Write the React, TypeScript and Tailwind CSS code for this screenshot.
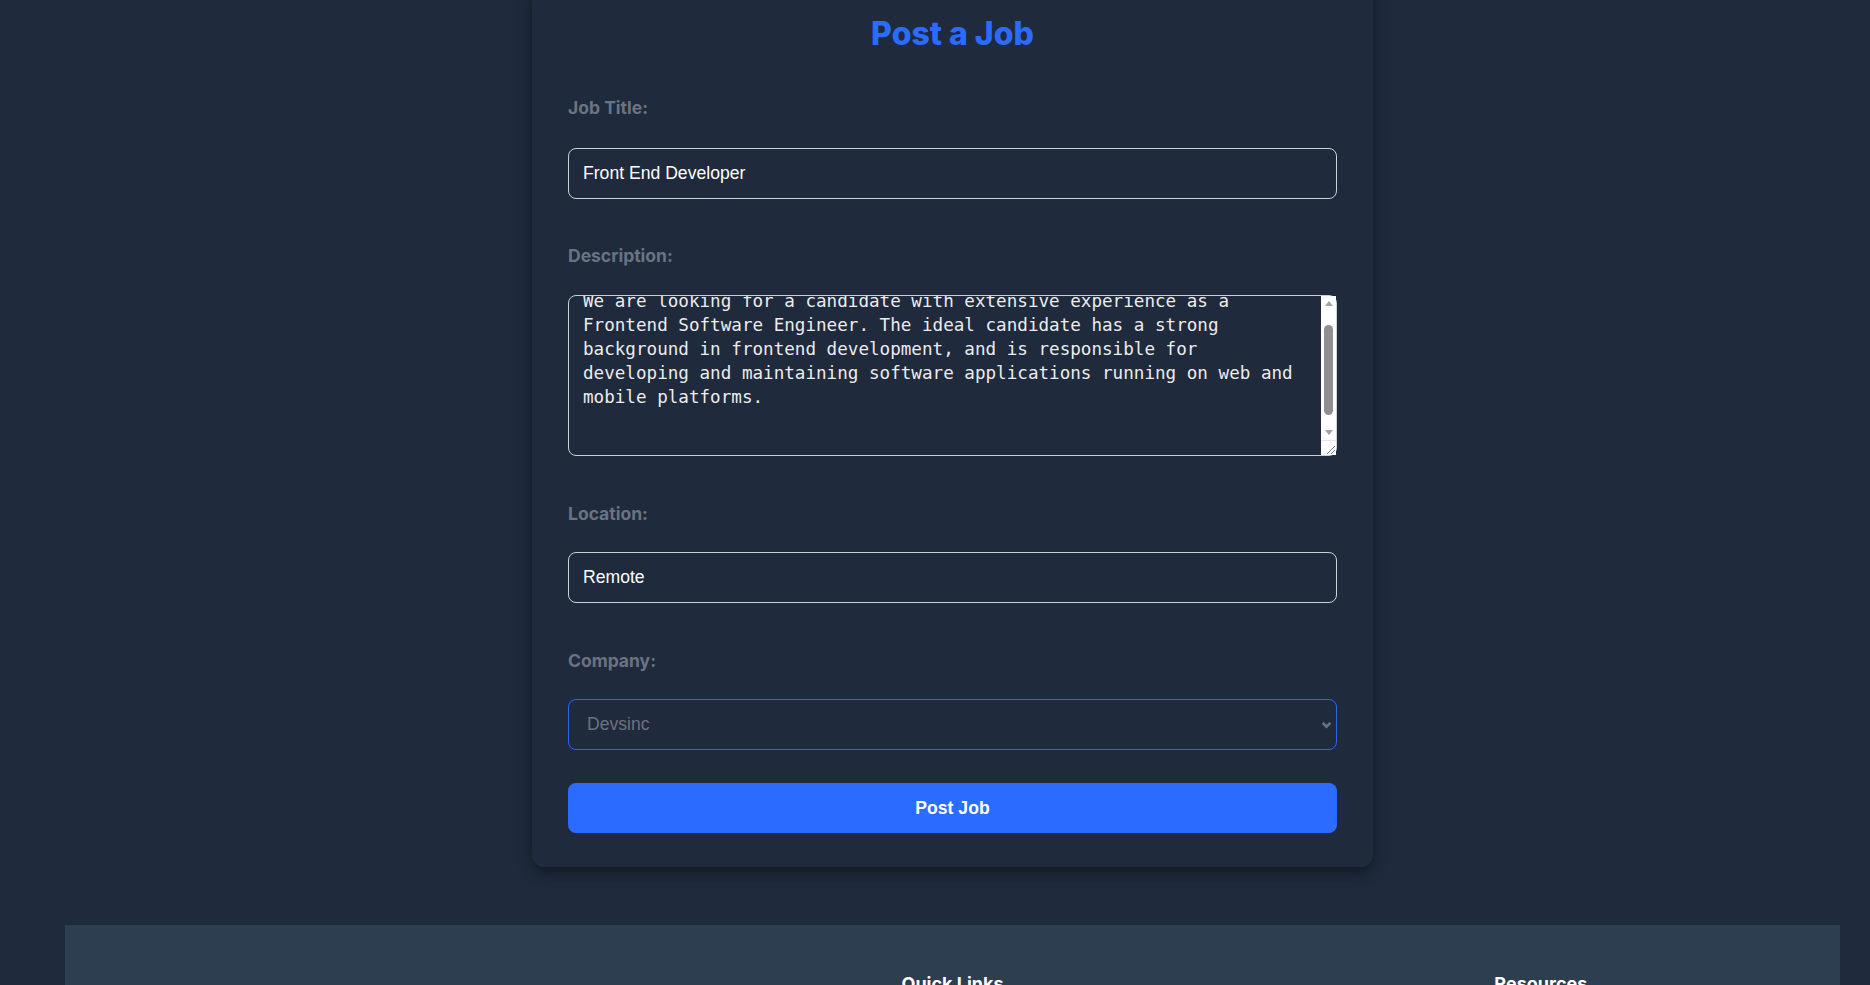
import type { ChangeEvent } from "react";
import { useEffect, useRef, useState } from "react";

const initialDescription =
  "We are looking for a candidate with extensive experience as a Frontend Software Engineer. The ideal candidate has a strong background in frontend development, and is responsible for developing and maintaining software applications running on web and mobile platforms.\n\n\n";

const companies = ["Devsinc", "Arbisoft", "Systems Ltd", "10Pearls"];

const labelClass =
  "block h-[24px] text-[17.5px] font-bold leading-[24px] text-[#6b7382] font-['Inter',sans-serif]";

const inputClass =
  "block h-[51px] w-full rounded-lg border border-[#cfcfcf] bg-transparent px-[14px] text-[17.6px] text-white outline-none font-['Liberation_Sans',Arial,sans-serif]";

// classic scrollbar look, drawn over the textarea
const ScrollbarOverlay = () => (
  <div className="pointer-events-none absolute bottom-[1px] right-[1px] top-[1px] flex w-[15px] flex-col bg-white">
    <div className="flex h-[15px] items-center justify-center">
      <svg className="h-[5px] w-[8px]" viewBox="0 0 8 5">
        <path d="M4 0 8 5H0z" fill="#a3a3a3" />
      </svg>
    </div>
    <div className="flex-1 px-[3px]">
      <div className="mt-[14px] h-[90px] rounded-full bg-[#8f8f8f]" />
    </div>
    <div className="flex h-[15px] items-center justify-center">
      <svg className="h-[5px] w-[8px]" viewBox="0 0 8 5">
        <path d="M0 0h8L4 5z" fill="#a3a3a3" />
      </svg>
    </div>
    <div className="relative h-[15px] border-t border-[#e5e5e5]">
      <svg className="absolute bottom-[1px] right-[1px] h-[9px] w-[9px]" viewBox="0 0 9 9" stroke="#7a7a7a" strokeWidth="1">
        <path d="M1 9 9 1M5 9 9 5" />
      </svg>
    </div>
  </div>
);

const PostJobPage = () => {
  const [title, setTitle] = useState("Front End Developer");
  const [description, setDescription] = useState(initialDescription);
  const [location, setLocation] = useState("Remote");
  const [company, setCompany] = useState("Devsinc");
  const descriptionRef = useRef<HTMLTextAreaElement>(null);

  useEffect(() => {
    if (descriptionRef.current) {
      descriptionRef.current.scrollTop = 22;
    }
  }, []);

  const changeHandlerTitle = (event: ChangeEvent<HTMLInputElement>) => {
    setTitle(event.target.value);
  };

  const changeHandlerDescription = (event: ChangeEvent<HTMLTextAreaElement>) => {
    setDescription(event.target.value);
  };

  const changeHandlerLocation = (event: ChangeEvent<HTMLInputElement>) => {
    setLocation(event.target.value);
  };

  const changeHandlerCompany = (event: ChangeEvent<HTMLSelectElement>) => {
    setCompany(event.target.value);
  };

  return (
    <div className="min-h-screen overflow-hidden bg-[#1f2a3c] pl-[35px]">
      <div className="mx-auto mt-[-20px] w-[841px] rounded-xl bg-[#1f2a3c] px-[36px] pb-[34px] pt-[36px] shadow-[0_6px_14px_rgba(0,0,0,0.4)]">
        <h2 className="text-center text-[32px] font-extrabold leading-[36px] text-[#2c6bff] font-['Inter',sans-serif]">
          Post a Job
        </h2>

        <label className={`${labelClass} mt-[44px] mb-[28px]`} htmlFor="title">
          Job Title:
        </label>
        <input id="title" type="text" className={inputClass} value={title} onChange={changeHandlerTitle} />

        <label className={`${labelClass} mt-[45px] mb-[27px]`} htmlFor="description">
          Description:
        </label>
        <div className="relative">
          <textarea
            id="description"
            ref={descriptionRef}
            className="block h-[161px] w-full resize-none overflow-y-auto rounded-lg border border-[#cfcfcf] bg-transparent py-[15px] pl-[14px] pr-[29px] text-[17.6px] leading-[24px] text-[#ececec] outline-none font-['DejaVu_Sans_Mono',monospace]"
            value={description}
            onChange={changeHandlerDescription}
          />
          <ScrollbarOverlay />
        </div>

        <label className={`${labelClass} mt-[46px] mb-[26px]`} htmlFor="location">
          Location:
        </label>
        <input id="location" type="text" className={inputClass} value={location} onChange={changeHandlerLocation} />

        <label className={`${labelClass} mt-[46px] mb-[26px]`} htmlFor="company">
          Company:
        </label>
        <div className="relative">
          <select
            id="company"
            className="block h-[51px] w-full appearance-none rounded-lg border border-[#2a66f0] bg-transparent pl-[18px] text-[17.6px] text-[#6b7280] outline-none font-['Liberation_Sans',Arial,sans-serif]"
            value={company}
            onChange={changeHandlerCompany}
          >
            {companies.map((name) => (
              <option key={name} value={name} className="bg-[#1f2a3c]">
                {name}
              </option>
            ))}
          </select>
          <svg
            className="pointer-events-none absolute right-[5px] top-[20px] h-[11px] w-[11px] text-[#6b7280]"
            viewBox="0 0 10 10"
            fill="none"
            stroke="currentColor"
            strokeWidth="2.4"
          >
            <path d="M1.5 3.5 5 7l3.5-3.5" />
          </svg>
        </div>

        <button
          type="button"
          className="mt-[33px] block h-[50px] w-full rounded-lg bg-[#2c6bff] text-[17.6px] font-bold text-white font-['Liberation_Sans',Arial,sans-serif]"
        >
          Post Job
        </button>
      </div>

      <footer className="mx-[30px] mt-[58px] grid grid-cols-3 bg-[#2c3e50] px-[5px] pb-[40px] pt-[45px] text-center text-white font-['Inter',sans-serif]">
        <div className="pt-[70px]">
          <p className="text-sm text-[#cbd5e1]">Find your next role with us.</p>
        </div>
        <div>
          <h3 className="text-[18px] font-bold leading-[28px]">Quick Links</h3>
          <ul className="mt-4 space-y-2 text-sm text-[#cbd5e1]">
            <li>Home</li>
            <li>Jobs</li>
            <li>Post a Job</li>
          </ul>
        </div>
        <div>
          <h3 className="text-[18px] font-bold leading-[28px]">Resources</h3>
          <ul className="mt-4 space-y-2 text-sm text-[#cbd5e1]">
            <li>Blog</li>
            <li>Help Center</li>
            <li>Contact</li>
          </ul>
        </div>
      </footer>
    </div>
  );
};

export default PostJobPage;
